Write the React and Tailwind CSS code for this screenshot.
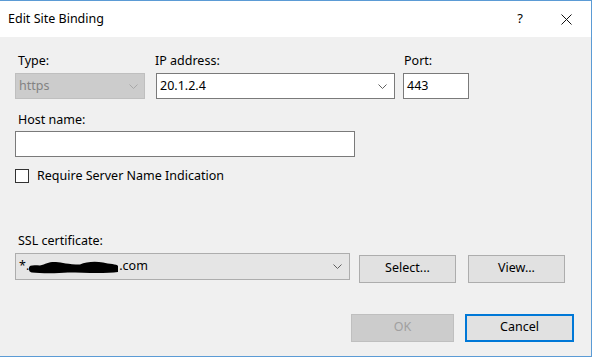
import React from 'react'

const font = { fontFamily: '"Noto Sans", "Liberation Sans", sans-serif' }

function Chevron({ color = '#606060' }) {
  return (
    <svg width="9" height="5" viewBox="0 0 9 5" className="shrink-0">
      <path d="M0.5 0.5 L4.5 4.5 L8.5 0.5" fill="none" stroke={color} strokeWidth="1" />
    </svg>
  )
}

function Label({ children, className = '' }) {
  return <div className={`h-4 text-[12.5px] leading-4 text-black ${className}`}>{children}</div>
}

export default function App() {
  return (
    <div className="w-[593px] h-[359px] bg-white overflow-hidden" style={font}>
      <div className="w-[592px] h-[357px] flex flex-col border-t border-r border-b border-[#5b9bd5]">
        {/* Title bar */}
        <div className="h-[36px] bg-white flex items-center shrink-0">
          <span className="ml-[8px] text-[12.5px] text-black">Edit Site Binding</span>
          <span className="ml-auto mr-[38px] text-[13px] text-black">?</span>
          <svg width="11" height="11" viewBox="0 0 11 11" className="mr-[19px]">
            <path d="M0.5 0.5 L10.5 10.5 M10.5 0.5 L0.5 10.5" stroke="#111" strokeWidth="1" />
          </svg>
        </div>

        {/* Body */}
        <div className="flex-1 bg-[#f0f0f0] pl-[15px] flex flex-col">
          {/* Type / IP / Port */}
          <div className="flex mt-[16px]">
            <div className="w-[130px] flex flex-col">
              <Label className="ml-[3px]">Type:</Label>
              <div className="mt-[4px] h-[26px] bg-[#cccccc] border border-[#bfbfbf] flex items-center pl-[3px] pr-[6px]">
                <span className="text-[12.5px] text-[#838383] flex-1">https</span>
                <Chevron color="#a8a8a8" />
              </div>
            </div>
            <div className="w-[239px] ml-[11px] flex flex-col">
              <Label className="-ml-[1px]">IP address:</Label>
              <div className="mt-[4px] h-[26px] bg-white border border-[#7a7a7a] flex items-center pl-[3px] pr-[7px]">
                <span className="text-[12.5px] text-black flex-1">20.1.2.4</span>
                <Chevron />
              </div>
            </div>
            <div className="w-[66px] ml-[8px] flex flex-col">
              <Label className="ml-[1px]">Port:</Label>
              <div className="mt-[4px] h-[26px] bg-white border border-[#7a7a7a] flex items-center pl-[3px]">
                <span className="text-[12.5px] text-black">443</span>
              </div>
            </div>
          </div>

          {/* Host name */}
          <Label className="ml-[3px] mt-[13px]">Host name:</Label>
          <div className="mt-[3px] w-[340px] h-[26px] bg-white border border-[#7a7a7a]" />

          {/* SNI checkbox */}
          <div className="flex items-center mt-[10px]">
            <div className="w-[14px] h-[14px] bg-white border border-[#333333]" />
            <span className="ml-[8px] text-[12.5px] text-black">Require Server Name Indication</span>
          </div>

          {/* SSL certificate */}
          <Label className="ml-[3px] mt-[47px]">SSL certificate:</Label>
          <div className="flex items-start mt-[4px]">
            <div className="w-[335px] h-[27px] bg-[#e5e5e5] border border-[#adadad] flex items-center pl-[3px] pr-[7px]">
              <span className="text-[12.5px] text-black">*.</span>
              <svg width="91" height="13" viewBox="0 0 91 13" className="-ml-[1px] mt-[2px]">
                <path d="M1 7 C1 4 5 4 12 4.5 C18 3 21 0.5 28 1 C34 1.5 40 3.5 52 3.5 C58 0.5 68 0 75 1.5 C81 3 89 3 90 5 L90 11 C80 12.5 60 12 40 11.5 C30 12.5 12 12.5 4 11.5 C1 11 1 9 1 7 Z" fill="#000" />
              </svg>
              <span className="text-[12.5px] text-black flex-1">.com</span>
              <Chevron />
            </div>
            <button className="ml-[9px] mt-[2px] w-[97px] h-[28px] bg-[#e1e1e1] border border-[#adadad] text-[12.5px] text-black">
              Select...
            </button>
            <button className="ml-[12px] mt-[2px] w-[97px] h-[28px] bg-[#e1e1e1] border border-[#adadad] text-[12.5px] text-black">
              View...
            </button>
          </div>

          {/* OK / Cancel */}
          <div className="flex mt-[31px]">
            <button className="ml-[336px] w-[103px] h-[28px] bg-[#cccccc] border border-[#bfbfbf] text-[12.5px] text-[#a0a0a0]">
              OK
            </button>
            <button className="ml-[11px] w-[109px] h-[28px] bg-[#e1e1e1] border-2 border-[#0078d7] text-[12.5px] text-black">
              Cancel
            </button>
          </div>
        </div>
      </div>
    </div>
  )
}
